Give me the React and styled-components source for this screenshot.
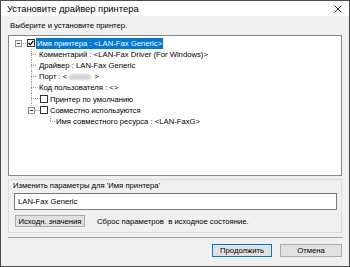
import React from "react";
import styled, { createGlobalStyle } from "styled-components";

const GlobalStyle = createGlobalStyle`
	html, body {
		margin: 0;
		padding: 0;
		background: #ffffff;
	}
	body {
		font-family: "Liberation Sans", Arial, sans-serif;
	}
`;

const Window = styled.div`
	width: 350px;
	height: 267px;
	box-sizing: border-box;
	border: 1px solid #4d4d4d;
	background: #f0f0f0;
	display: flex;
	flex-direction: column;
	font-size: 7.7px;
	color: #000;
`;

const TitleBar = styled.div`
	height: 15px;
	background: #fff;
	display: flex;
	align-items: center;
	justify-content: space-between;
	padding: 0 7px 0 6px;
	font-size: 9.4px;
	color: #000;
`;

const Body = styled.div`
	display: flex;
	flex-direction: column;
	padding: 0 7px;
`;

const Instruction = styled.div`
	height: 19px;
	line-height: 19px;
	padding-left: 2px;
`;

const TreeBox = styled.div`
	height: 141px;
	box-sizing: border-box;
	border: 1px solid #828790;
	background: #fff;
	padding-top: 1.5px;
	display: flex;
	flex-direction: column;
`;

const TreeRow = styled.div`
	height: 11.2px;
	display: flex;
	align-items: center;
	white-space: nowrap;
`;

const Guide = styled.svg`
	flex: none;
	display: block;
`;

const Check = styled.span`
	flex: none;
	width: 8px;
	height: 8px;
	box-sizing: border-box;
	border: 1px solid #333;
	background: #fff;
	display: flex;
	align-items: center;
	justify-content: center;
	margin-right: ${({ $gap }) => $gap}px;
`;

const Label = styled.span`
	line-height: 11px;
	padding: 0 1px;
	background: ${({ $selected }) => ($selected ? "#0078d7" : "transparent")};
	color: ${({ $selected }) => ($selected ? "#fff" : "#000")};
`;

const Hidden = styled.span`
	display: inline-block;
	width: 22px;
	height: 6px;
	margin: 0 3px 0 2px;
	vertical-align: middle;
	background: #d6d6d6;
	border-radius: 2px;
	filter: blur(1.2px);
`;

const Group = styled.div`
	margin-top: 3px;
	height: 54px;
	box-sizing: border-box;
	border: 1px solid #dcdcdc;
	padding: 0 4px 0 5px;
	display: flex;
	flex-direction: column;
`;

const GroupLabel = styled.div`
	line-height: 11px;
	height: 11px;
	margin-left: -1px;
`;

const TextBox = styled.div`
	margin-top: 2px;
	height: 17px;
	box-sizing: border-box;
	border: 1px solid #7a7a7a;
	background: #fff;
	padding-left: 3px;
	display: flex;
	align-items: center;
`;

const ResetRow = styled.div`
	margin-top: 5px;
	display: flex;
	align-items: center;
	gap: 12px;
	padding-left: 1px;
	white-space: pre;
`;

const Button = styled.div`
	width: ${({ $w }) => $w}px;
	height: ${({ $h }) => $h}px;
	box-sizing: border-box;
	border: 1px solid ${({ $primary }) => ($primary ? "#0078d7" : "#adadad")};
	background: #e1e1e1;
	display: flex;
	align-items: center;
	justify-content: center;
	white-space: nowrap;
`;

const Separator = styled.div`
	margin-top: 4px;
	height: 1px;
	background: #a0a0a0;
	margin-right: -1px;
`;

const Footer = styled.div`
	margin-top: 6px;
	display: flex;
	justify-content: flex-end;
	gap: 8px;
`;

const dot = { stroke: "#a0a0a0", strokeWidth: 1, strokeDasharray: "1 1", shapeRendering: "crispEdges" };

function Expander({ cx, cy }) {
	return (
		<g shapeRendering="crispEdges">
			<rect x={cx - 3} y={cy - 3} width="6" height="6" fill="#fff" stroke="#8e8f8f" />
			<line x1={cx - 1.5} y1={cy} x2={cx + 2} y2={cy} stroke="#333" />
		</g>
	);
}

// w = width of the guide column, vertical line at vx, horizontal from vx to hx
function Branch({ w, vx, hx, last, expander }) {
	const h = 11.2;
	const mid = 5.5;
	return (
		<Guide width={w} height={h} viewBox={`0 0 ${w} ${h}`}>
			<line x1={vx} y1="0" x2={vx} y2={last ? mid : h} style={dot} />
			<line x1={vx} y1={mid} x2={hx} y2={mid} style={dot} />
			{expander && <Expander cx={vx} cy={mid} />}
		</Guide>
	);
}

function CheckMark() {
	return (
		<svg width="6" height="6" viewBox="0 0 6 6">
			<path d="M0.6 3 L2.3 4.8 L5.4 0.9" fill="none" stroke="#000" strokeWidth="1.3" />
		</svg>
	);
}

export default function App() {
	return (
		<>
			<GlobalStyle />
			<Window>
				<TitleBar>
					<span>Установите драйвер принтера</span>
					<svg width="8" height="8" viewBox="0 0 8 8">
						<path d="M0.5 0.5 L7.5 7.5 M7.5 0.5 L0.5 7.5" stroke="#111" strokeWidth="0.9" />
					</svg>
				</TitleBar>
				<Body>
					<Instruction>Выберите и установите принтер.</Instruction>
					<TreeBox>
						<TreeRow>
							<Guide width="18" height="11.2" viewBox="0 0 18 11.2">
								<line x1="10" y1="5.5" x2="18" y2="5.5" style={dot} />
								<Expander cx={9.5} cy={5.5} />
							</Guide>
							<Check $gap={1}>
								<CheckMark />
							</Check>
							<Label $selected>Имя принтера : &lt;LAN-Fax Generic&gt;</Label>
						</TreeRow>
						<TreeRow>
							<Branch w={29} vx={22.5} hx={28} />
							<Label>Комментарий : &lt;LAN-Fax Driver (For Windows)&gt;</Label>
						</TreeRow>
						<TreeRow>
							<Branch w={29} vx={22.5} hx={28} />
							<Label>Драйвер : LAN-Fax Generic</Label>
						</TreeRow>
						<TreeRow>
							<Branch w={29} vx={22.5} hx={28} />
							<Label>
								Порт : &lt;
								<Hidden />
								&gt;
							</Label>
						</TreeRow>
						<TreeRow>
							<Branch w={29} vx={22.5} hx={28} />
							<Label>Код пользователя : &lt;&gt;</Label>
						</TreeRow>
						<TreeRow>
							<Branch w={31} vx={22.5} hx={31} />
							<Check $gap={1} />
							<Label>Принтер по умолчанию</Label>
						</TreeRow>
						<TreeRow>
							<Branch w={31} vx={22.5} hx={31} last expander />
							<Check $gap={1} />
							<Label>Совместно используются</Label>
						</TreeRow>
						<TreeRow>
							<Branch w={46} vx={41.5} hx={46} last />
							<Label>Имя совместного ресурса : &lt;LAN-FaxG&gt;</Label>
						</TreeRow>
					</TreeBox>
					<Group>
						<GroupLabel>Изменить параметры для 'Имя принтера'</GroupLabel>
						<TextBox>LAN-Fax Generic</TextBox>
						<ResetRow>
							<Button $w={70} $h={12}>
								Исходн. значения
							</Button>
							<span>Сброс параметров  в исходное состояние.</span>
						</ResetRow>
					</Group>
					<Separator />
					<Footer>
						<Button $w={60} $h={13} $primary>
							Продолжить
						</Button>
						<Button $w={62} $h={13}>
							Отмена
						</Button>
					</Footer>
				</Body>
			</Window>
		</>
	);
}
